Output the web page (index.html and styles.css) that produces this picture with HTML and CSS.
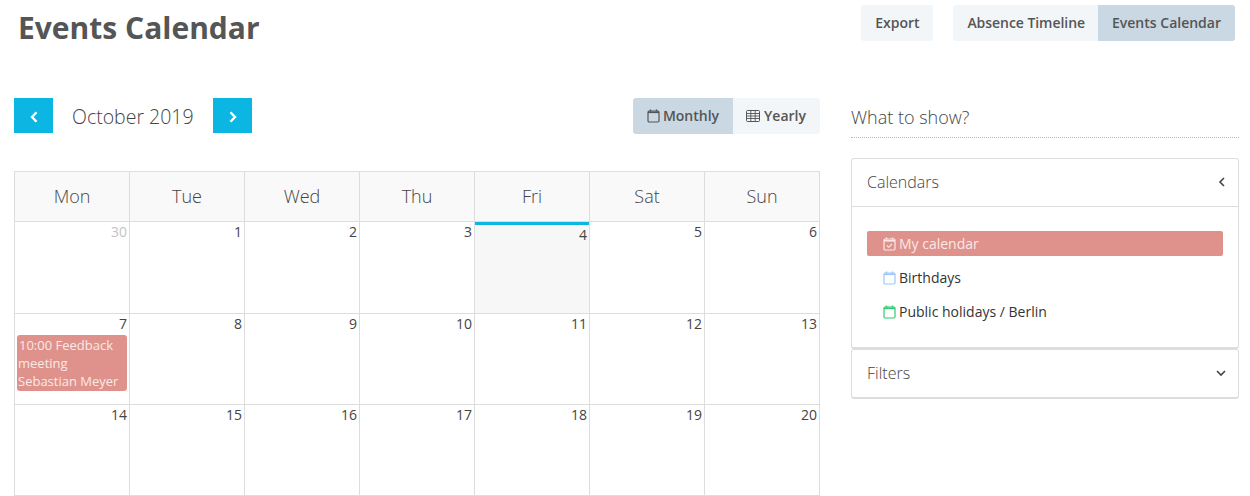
FILE: index.html
```html
<!DOCTYPE html>
<html lang="en">
<head>
<meta charset="UTF-8">
<title>Events Calendar</title>
<link rel="stylesheet" href="styles.css">
</head>
<body>

<header class="page-head">
  <h1>Events Calendar</h1>
  <div class="head-actions">
    <a class="btn">Export</a>
    <div class="btn-group">
      <a class="btn timeline">Absence Timeline</a>
      <a class="btn active">Events Calendar</a>
    </div>
  </div>
</header>

<div class="content">
  <main class="calendar">
    <div class="toolbar">
      <button class="nav-btn">
        <svg width="10" height="12" viewBox="0 0 10 12"><path d="M7.500 1.200L3 6l4.500 4.800" fill="none" stroke="#fff" stroke-width="2.400"/></svg>
      </button>
      <span class="month-name">October 2019</span>
      <button class="nav-btn">
        <svg width="10" height="12" viewBox="0 0 10 12"><path d="M2.500 1.200L7 6l-4.500 4.800" fill="none" stroke="#fff" stroke-width="2.400"/></svg>
      </button>
      <div class="btn-group view-switch">
        <a class="btn active">
          <svg width="13" height="14" viewBox="0 0 13 14"><path d="M3.500 .5v2M9.500 .5v2" stroke="#555" stroke-width="1.400" fill="none"/><rect x="1" y="2" width="11" height="11" rx="1.200" fill="none" stroke="#555" stroke-width="1.200"/><path d="M1 3.300h11" stroke="#555" stroke-width="1.600"/></svg>
          Monthly
        </a>
        <a class="btn yearly">
          <svg width="14" height="12" viewBox="0 0 14 12"><rect x=".5" y=".5" width="13" height="11" rx="1" fill="none" stroke="#555"/><path d="M.5 3.500h13M.5 6h13M.5 8.500h13M4.800 .5v11M9.200 .5v11" stroke="#555" stroke-width=".9" fill="none"/></svg>
          Yearly
        </a>
      </div>
    </div>

    <table class="month">
      <thead>
        <tr><th>Mon</th><th>Tue</th><th>Wed</th><th>Thu</th><th>Fri</th><th>Sat</th><th>Sun</th></tr>
      </thead>
      <tbody>
        <tr class="first-week">
          <td class="other-month">30</td><td>1</td><td>2</td><td>3</td><td class="today">4</td><td>5</td><td>6</td>
        </tr>
        <tr>
          <td>7
            <div class="event">10:00 Feedback meeting Sebastian Meyer</div>
          </td>
          <td>8</td><td>9</td><td>10</td><td>11</td><td>12</td><td>13</td>
        </tr>
        <tr>
          <td>14</td><td>15</td><td>16</td><td>17</td><td>18</td><td>19</td><td>20</td>
        </tr>
      </tbody>
    </table>
  </main>

  <aside class="sidebar">
    <h2>What to show?</h2>

    <section class="panel">
      <div class="panel-head open">
        Calendars
        <svg width="8" height="10" viewBox="0 0 8 10"><path d="M6 1L2 5l4 4" fill="none" stroke="#444" stroke-width="1.600"/></svg>
      </div>
      <ul class="cal-list">
        <li class="selected">
          <svg width="13" height="14" viewBox="0 0 13 14"><path d="M3.500 .5v2M9.500 .5v2" stroke="#f9e8e6" stroke-width="1.400" fill="none"/><rect x="1" y="2" width="11" height="11" rx="1.200" fill="none" stroke="#f9e8e6" stroke-width="1.200"/><path d="M1 3.800h11" stroke="#f9e8e6" stroke-width="1.600"/><path d="M4 8.500l1.800 1.800L9 7" fill="none" stroke="#f9e8e6" stroke-width="1.100"/></svg>
          My calendar
        </li>
        <li>
          <svg width="13" height="14" viewBox="0 0 13 14"><path d="M3.500 .5v2M9.500 .5v2" stroke="#9cc6fb" stroke-width="1.400" fill="none"/><rect x="1" y="2" width="11" height="11" rx="1.200" fill="none" stroke="#9cc6fb" stroke-width="1.200"/><path d="M1 3.300h11" stroke="#9cc6fb" stroke-width="1.600"/></svg>
          Birthdays
        </li>
        <li>
          <svg width="13" height="14" viewBox="0 0 13 14"><path d="M3.500 .5v2M9.500 .5v2" stroke="#2ecc71" stroke-width="1.400" fill="none"/><rect x="1" y="2" width="11" height="11" rx="1.200" fill="none" stroke="#2ecc71" stroke-width="1.200"/><path d="M1 3.300h11" stroke="#2ecc71" stroke-width="1.600"/></svg>
          Public holidays / Berlin
        </li>
      </ul>
    </section>

    <section class="panel">
      <div class="panel-head">
        Filters
        <svg width="10" height="8" viewBox="0 0 10 8"><path d="M1 2l4 4 4-4" fill="none" stroke="#444" stroke-width="1.600"/></svg>
      </div>
    </section>
  </aside>
</div>

</body>
</html>
```

FILE: styles.css
```css
* {
  box-sizing: border-box;
}

body {
  margin: 0;
  font-family: "Open Sans", sans-serif;
  font-size: 14px;
  color: #333;
  background: #fff;
  overflow: hidden;
}

.page-head {
  display: flex;
  justify-content: space-between;
  align-items: flex-start;
  padding: 5px 15px 0 18px;
  height: 98px;
}

h1 {
  margin: 2px 0 0;
  font-size: 30px;
  line-height: 41px;
  font-weight: 700;
  color: #555;
}

.head-actions {
  display: flex;
  gap: 20px;
}

.btn {
  display: flex;
  align-items: center;
  gap: 3px;
  height: 36px;
  padding: 0 14px 2px;
  background: #f2f6f9;
  color: #555;
  font-size: 14px;
  font-weight: 600;
  letter-spacing: -0.05px;
  border-radius: 3px;
}

.btn.timeline {
  padding-right: 13px;
}

.btn-group {
  display: flex;
}

.btn-group .btn {
  border-radius: 0;
}

.btn-group .btn:first-child {
  border-radius: 3px 0 0 3px;
}

.btn-group .btn:last-child {
  border-radius: 0 3px 3px 0;
}

.btn.active {
  background: #c9d8e2;
  letter-spacing: 0;
}

.content {
  display: flex;
  align-items: flex-start;
  padding-left: 14px;
}

.calendar {
  width: 806px;
}

.toolbar {
  display: flex;
  align-items: flex-start;
  height: 73px;
}

.nav-btn {
  display: flex;
  align-items: center;
  justify-content: center;
  width: 39px;
  height: 35px;
  padding: 3px 0 0;
  border: none;
  background: #0bb6e2;
}

.month-name {
  width: 160px;
  padding-left: 19px;
  font-size: 19.500px;
  font-weight: 300;
  line-height: 37px;
  color: #444;
}

.view-switch {
  margin-left: auto;
}

.view-switch .btn {
  padding: 0 14px 1px;
  letter-spacing: 0;
}

.view-switch .yearly {
  padding-left: 13px;
  gap: 4px;
}

.month {
  width: 806px;
  table-layout: fixed;
  border-collapse: collapse;
}

.month th,
.month td {
  border: 1px solid #ddd;
}

.month th {
  height: 50px;
  padding: 0 0 2px;
  background: #f9f9f9;
  font-size: 18px;
  font-weight: 300;
  color: #444;
}

.month td {
  height: 91px;
  padding: 0 2px;
  vertical-align: top;
  text-align: right;
  font-size: 14px;
  line-height: 19px;
  color: #444;
}

.first-week td {
  height: 92px;
}

.month .other-month {
  color: #c4c4c4;
}

.month .today {
  background: #f7f7f7;
  box-shadow: inset 0 3px 0 #0bb6e2;
  padding-top: 3px;
}

.event {
  margin-top: 2px;
  padding: 1px 1px;
  background: #df928b;
  border-radius: 3px;
  color: #f8e9e7;
  font-size: 13px;
  line-height: 18px;
  text-align: left;
  text-indent: 1px;
}

.sidebar {
  width: 388px;
  margin-left: 31px;
}

h2 {
  margin: 0 0 20px;
  height: 40px;
  font-size: 18px;
  font-weight: 300;
  line-height: 39px;
  color: #444;
  border-bottom: 1px dotted #bbb;
}

.panel {
  border: 1px solid #ddd;
  border-bottom-width: 2px;
  border-radius: 3px;
}

.panel-head {
  display: flex;
  justify-content: space-between;
  align-items: center;
  height: 47px;
  padding: 0 12px 1px 15px;
  font-size: 16px;
  font-weight: 300;
  color: #444;
}

.panel-head.open {
  height: 48px;
  border-bottom: 1px solid #ddd;
}

.cal-list {
  list-style: none;
  margin: 0;
  padding: 24px 15px 23px;
}

.cal-list li {
  display: flex;
  align-items: center;
  gap: 3px;
  height: 25px;
  margin-bottom: 9px;
  padding-left: 16px;
  border-radius: 2px;
  font-size: 14px;
  color: #333;
}

.cal-list li:last-child {
  margin-bottom: 0;
}

.cal-list .selected {
  background: #df928b;
  color: #f8e9e7;
}
```
